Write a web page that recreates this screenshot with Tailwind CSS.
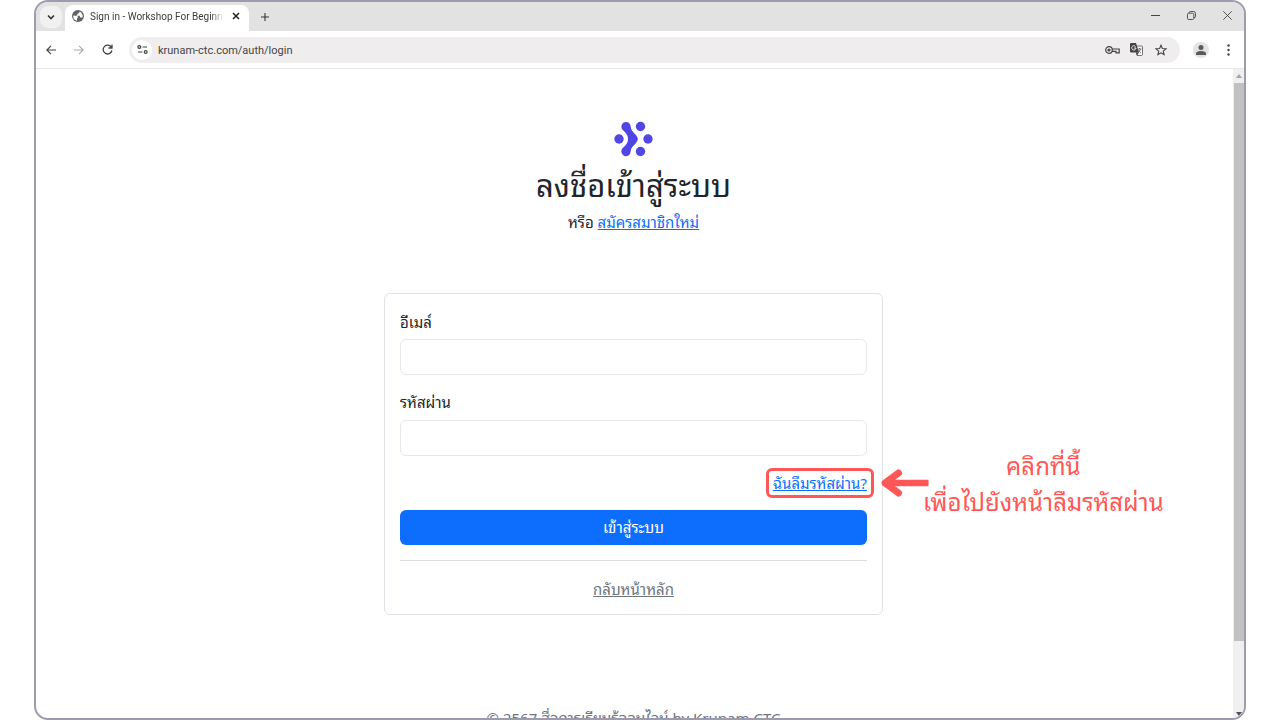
<!DOCTYPE html>
<html lang="th">
<head>
    <meta charset="UTF-8">
    <meta name="viewport" content="width=device-width, initial-scale=1.0">
    <title>Sign in - Workshop For Beginner</title>
    <script src="https://cdn.jsdelivr.net/npm/@tailwindcss/browser@4"></script>
    <style>
        body {
            font-family: 'Noto Sans', 'Noto Sans Thai Looped', 'Loma', 'Waree', 'Garuda', sans-serif;
        }
        .chrome {
            font-family: Roboto, sans-serif;
        }
    </style>
</head>
<body class="h-screen overflow-hidden bg-white px-[34px] text-[#212529]">
    <div class="flex h-full flex-col overflow-hidden rounded-[14px] border-2 border-[#9f9bae] bg-white">

        <!-- Tab strip -->
        <header class="chrome flex h-[29px] shrink-0 items-stretch bg-[#e2e2e2] text-[#3c3c3c]">
            <div class="flex w-[29px] items-center justify-center">
                <button type="button" aria-label="Search tabs" class="flex size-[22px] items-center justify-center rounded-lg bg-[#f1f1f1]">
                    <svg class="size-2" viewBox="0 0 8 8" fill="none" stroke="#333" stroke-width="1.6"><path d="M1 2.5 4 5.5 7 2.5"/></svg>
                </button>
            </div>
            <div class="mt-[3px] flex w-[184px] items-center rounded-t-lg bg-white pr-[9px] pb-1 pl-[7px]">
                <svg class="size-3 shrink-0" viewBox="0 0 24 24"><circle cx="12" cy="12" r="12" fill="#5f6368"/><path d="M2.500 11 8 11.500C11 12 12.500 13 12.500 15.500H10V21.400A9.600 9.600 0 0 1 2.500 11zM15 3C15 6 13 7 11 7.500 11 10 9 9.500 9 11.500H15.500C15.500 14 16.500 15 18.500 15H21A9.600 9.600 0 0 0 15 3z" fill="#fff"/></svg>
                <span class="ml-1.5 w-[134px] overflow-hidden mask-r-from-90% text-[10px] whitespace-nowrap">Sign in - Workshop For Beginner</span>
                <button type="button" aria-label="Close tab" class="ml-auto">
                    <svg class="size-2" viewBox="0 0 8 8" stroke="#222" stroke-width="1.500"><path d="M1 1 7 7M7 1 1 7"/></svg>
                </button>
            </div>
            <button type="button" aria-label="New tab" class="ml-3">
                <svg class="size-2" viewBox="0 0 8 8" stroke="#333" stroke-width="1.100"><path d="M4 0V8M0 4H8"/></svg>
            </button>
            <div class="ml-auto flex items-center gap-[27px] pr-3 pb-0.5">
                <button type="button" aria-label="Minimize"><svg class="size-[9px]" viewBox="0 0 9 9" stroke="#444"><path d="M0 4.500H9"/></svg></button>
                <button type="button" aria-label="Restore"><svg class="size-[9px]" viewBox="0 0 9 9" fill="none" stroke="#444" stroke-width=".9"><rect x=".5" y="2.200" width="6.300" height="6.300" rx="1.200"/><path d="M2.200 2V1.800Q2.200.5 3.500.5H6.500Q8.500.5 8.500 2.500V5.500Q8.500 6.800 7 6.800"/></svg></button>
                <button type="button" aria-label="Close"><svg class="size-[9px]" viewBox="0 0 9 9" stroke="#444" stroke-width=".9"><path d="M.3.3 8.700 8.700M8.700.3.3 8.700"/></svg></button>
            </div>
        </header>

        <!-- Toolbar -->
        <nav class="chrome flex h-[38px] shrink-0 items-center border-b border-[#e6e6e8] pr-3.5 pl-2.5">
            <button type="button" aria-label="Back"><svg class="size-[10px]" viewBox="0 0 10 10" fill="none" stroke="#444" stroke-width="1.200"><path d="M10 5H1M5 .8.8 5 5 9.200"/></svg></button>
            <button type="button" aria-label="Forward" class="ml-[18px]"><svg class="size-[10px]" viewBox="0 0 10 10" fill="none" stroke="#aaa" stroke-width="1.100"><path d="M0 5H9M5 .8 9.200 5 5 9.200"/></svg></button>
            <button type="button" aria-label="Reload" class="ml-[18px]"><svg class="size-[11px]" viewBox="0 0 11 11" fill="none" stroke="#444" stroke-width="1.300"><path d="M9.500 3.500A4.400 4.400 0 1 0 9.900 6.500M10 .5V4H6.500"/></svg></button>
            <div class="ml-4 flex h-[26px] grow items-center rounded-full bg-[#efedee] pr-[13px] pl-[3px]">
                <button type="button" aria-label="Site information" class="flex size-5 shrink-0 items-center justify-center rounded-full bg-white">
                    <svg class="size-[11px]" viewBox="0 0 11 11" fill="none" stroke="#444" stroke-width="1.200"><circle cx="2.300" cy="3" r="1.400"/><path d="M5.500 3H10M1 8H5.500"/><circle cx="8.700" cy="8" r="1.400"/></svg>
                </button>
                <input type="text" aria-label="Address" value="krunam-ctc.com/auth/login" class="ml-1.5 min-w-0 grow bg-transparent pt-[3px] text-[11px] text-[#444] outline-none">
                <div class="flex items-center gap-3">
                    <button type="button" aria-label="Passwords"><svg class="h-[10px] w-[15px]" viewBox="0 0 15 10" fill="none" stroke="#444" stroke-width="1.200"><circle cx="4" cy="5" r="3.300"/><path d="M7.200 4H14.200V7.800H11V6.300H7"/><circle cx="4" cy="5" r="1" fill="#444"/></svg></button>
                    <button type="button" aria-label="Translate" class="-ml-0.5">
                        <svg class="size-[13px]" viewBox="0 0 26 26"><path d="M10 6H23a2 2 0 0 1 2 2V23a2 2 0 0 1-2 2H14z" fill="#f7f7f7" stroke="#555" stroke-width="1.600"/><path d="M2 0H12L18 19H2a2 2 0 0 1-2-2V2a2 2 0 0 1 2-2z" fill="#444"/><path d="M11 7A4.300 4.300 0 1 0 12 10H8" fill="none" stroke="#fff" stroke-width="1.800"/><path d="M15 12H23M19 10V12M21 12Q20 17 16 19M17 14Q19 18 22 20" fill="none" stroke="#555" stroke-width="1.500"/><path d="M12 19H18L14 25z" fill="#444"/></svg>
                    </button>
                    <button type="button" aria-label="Bookmark"><svg class="size-3" viewBox="0 0 24 24" fill="none" stroke="#444" stroke-width="2.200"><path d="M12 2.500 14.800 9 22 9.600 16.500 14.300 18.200 21.300 12 17.600 5.800 21.300 7.500 14.300 2 9.600 9.200 9z"/></svg></button>
                </div>
            </div>
            <button type="button" aria-label="Profile" class="ml-[13px] flex size-4 items-center justify-center rounded-full bg-[#e3e3e3]">
                <svg class="size-[10px]" viewBox="0 0 10 10" fill="#5a5a5a"><circle cx="5" cy="2.500" r="2.500"/><path d="M0 10V8.500Q0 6 5 6T10 8.500V10z"/></svg>
            </button>
            <button type="button" aria-label="Menu" class="ml-[18px]"><svg class="h-3 w-[3px]" viewBox="0 0 3 12" fill="#444"><circle cx="1.500" cy="1.500" r="1.200"/><circle cx="1.500" cy="6" r="1.200"/><circle cx="1.500" cy="10.500" r="1.200"/></svg></button>
        </nav>

        <div class="flex min-h-0 grow">
            <main class="flex grow flex-col items-center overflow-hidden pt-[52px] pr-0.5 text-[15px]">
                <svg class="h-9 w-10 shrink-0" viewBox="0 0 40 36" fill="#4f46e5">
                    <circle cx="5" cy="18" r="4.700"/>
                    <circle cx="26.500" cy="5.500" r="4.700"/>
                    <circle cx="34" cy="18" r="4.700"/>
                    <circle cx="26.500" cy="30.500" r="4.700"/>
                    <path d="M12 1A4.700 4.700 0 0 1 16.700 5.500C16.700 11 23.800 13.500 23.800 18S16.700 25 16.700 30.500A4.700 4.700 0 1 1 9 26.800C12 24 14 22 14 18S12 12 9 9.200A4.700 4.700 0 0 1 12 1z"/>
                </svg>
                <h1 class="mt-2 text-[31px] leading-10">ลงชื่อเข้าสู่ระบบ</h1>
                <p class="mt-1.5 leading-[22px]">หรือ <a href="#" class="text-[#0d6efd] underline">สมัครสมาชิกใหม่</a></p>

                <form class="mt-[60px] flex w-[499px] shrink-0 flex-col rounded-md border border-[#dee2e6] p-[15px] pt-[17px] pb-3.5">
                    <label for="email" class="leading-[22px]">อีเมล์</label>
                    <input id="email" type="email" class="mt-[6px] h-9 rounded-md border border-[#e6e8ea] px-3">
                    <label for="password" class="mt-4 leading-[22px]">รหัสผ่าน</label>
                    <input id="password" type="password" class="mt-[7px] h-9 rounded-md border border-[#e6e8ea] px-3">

                    <div class="relative mt-4 self-end">
                        <a href="#" class="block leading-[22px] text-[#0d6efd] underline">ฉันลืมรหัสผ่าน?</a>
                        <!-- Callout over the forgot-password link -->
                        <div class="pointer-events-none absolute -inset-x-[7px] -inset-y-1 rounded-md border-[3px] border-[#ff5757]"></div>
                        <svg class="absolute -top-[3px] left-full ml-3.5 h-7 w-12" viewBox="0 0 48 28" fill="none" stroke="#ff5757"><path d="M47.500 14H6" stroke-width="6.500"/><path d="M17.500 4 4 14 17.500 24" stroke-width="7" stroke-linecap="round" stroke-linejoin="round"/></svg>
                        <p class="absolute -top-6 left-full ml-14 text-center text-[24px] leading-9 whitespace-nowrap text-[#ff5757]">คลิกที่นี้<br>เพื่อไปยังหน้าลืมรหัสผ่าน</p>
                    </div>

                    <button type="submit" class="mt-4 h-[35px] rounded-md bg-[#0d6efd] text-white">เข้าสู่ระบบ</button>
                    <hr class="mt-[15px] border-[#dcdddf]">
                    <a href="#" class="mt-[17px] self-center leading-[22px] text-[#6c757d] underline">กลับหน้าหลัก</a>
                </form>

                <footer class="mt-[92px] shrink-0 leading-[22px] text-[#6c757d]">© 2567 สื่อการเรียนรู้ออนไลน์ by Krunam CTC</footer>
            </main>

            <!-- Scrollbar -->
            <div class="flex w-[11px] shrink-0 flex-col items-center bg-[#f0f0f0]">
                <svg class="my-[5px] h-1 w-1.5 shrink-0" viewBox="0 0 6 4" fill="#a3a3a3"><path d="M0 4 3 0 6 4z"/></svg>
                <div class="h-[86%] w-[10px] self-end bg-[#c1c1c1]"></div>
                <svg class="mt-auto mb-0.5 h-1 w-1.5 shrink-0" viewBox="0 0 6 4" fill="#505050"><path d="M0 0H6L3 4z"/></svg>
            </div>
        </div>
    </div>
</body>
</html>
